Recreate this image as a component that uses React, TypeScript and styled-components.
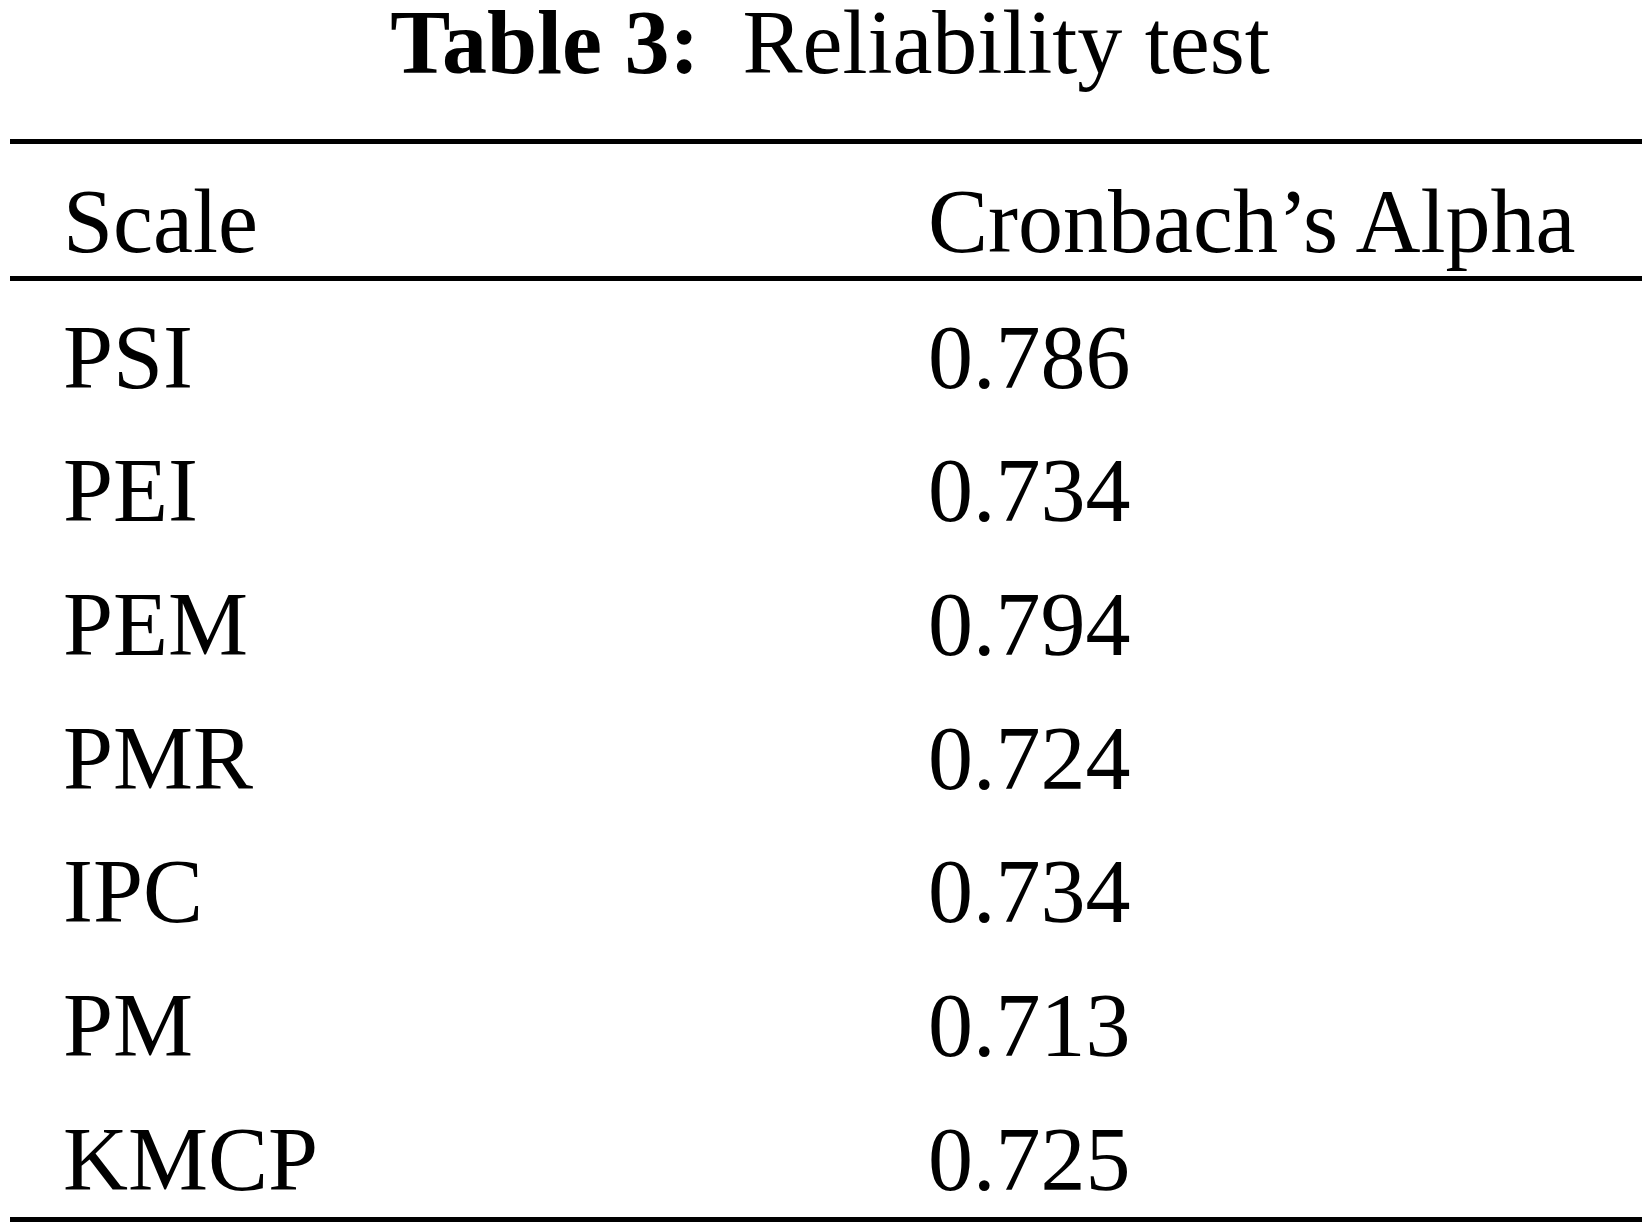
import styled, { createGlobalStyle } from "styled-components";

const rows = [
  { scale: "PSI", alpha: "0.786" },
  { scale: "PEI", alpha: "0.734" },
  { scale: "PEM", alpha: "0.794" },
  { scale: "PMR", alpha: "0.724" },
  { scale: "IPC", alpha: "0.734" },
  { scale: "PM", alpha: "0.713" },
  { scale: "KMCP", alpha: "0.725" },
];

const GlobalStyle = createGlobalStyle`
  html, body {
    margin: 0;
    padding: 0;
    background: #ffffff;
  }

  body {
    font-family: "Liberation Serif", "Times New Roman", serif;
    color: #000000;
  }
`;

const App = () => {
  return (
    <>
      <GlobalStyle />
      <Page>
        <Caption>
          <CaptionLabel>Table 3:</CaptionLabel>
          <span>Reliability test</span>
        </Caption>

        <Table>
          <colgroup>
            <col style={{ width: 918 }} />
            <col style={{ width: 714 }} />
          </colgroup>
          <thead>
            <tr>
              <HeadCell first>Scale</HeadCell>
              <HeadCell>Cronbach’s Alpha</HeadCell>
            </tr>
          </thead>
          <tbody>
            {rows.map((row) => (
              <tr key={row.scale}>
                <Cell first>{row.scale}</Cell>
                <Cell>{row.alpha}</Cell>
              </tr>
            ))}
          </tbody>
        </Table>
      </Page>
    </>
  );
};

const Page = styled.div`
  width: 1632px;
  padding: 0 10px;
  font-size: 90px;
`;

const Caption = styled.div`
  display: flex;
  justify-content: center;
  gap: 43px;
  padding: 3px 0 0 8px;
  margin-bottom: 56px;
  line-height: 80px;
  white-space: nowrap;
`;

const CaptionLabel = styled.span`
  font-weight: 700;
`;

const Table = styled.table`
  width: 1632px;
  table-layout: fixed;
  border-collapse: separate;
  border-spacing: 0;
  border-top: 5px solid #000;
  border-bottom: 5px solid #000;
`;

const HeadCell = styled.th<{ first?: boolean }>`
  height: 132px;
  box-sizing: border-box;
  padding: 27.6px 0 4.4px ${(props) => (props.first ? "53px" : "0")};
  border-bottom: 5px solid #000;
  font-weight: 400;
  text-align: left;
  line-height: 100px;
  white-space: nowrap;
  vertical-align: top;
`;

const Cell = styled.td<{ first?: boolean }>`
  height: 133.7px;
  box-sizing: border-box;
  padding: 26.6px 0 7.1px ${(props) => (props.first ? "53px" : "0")};
  line-height: 100px;
  white-space: nowrap;
  vertical-align: top;
`;

export default App;
